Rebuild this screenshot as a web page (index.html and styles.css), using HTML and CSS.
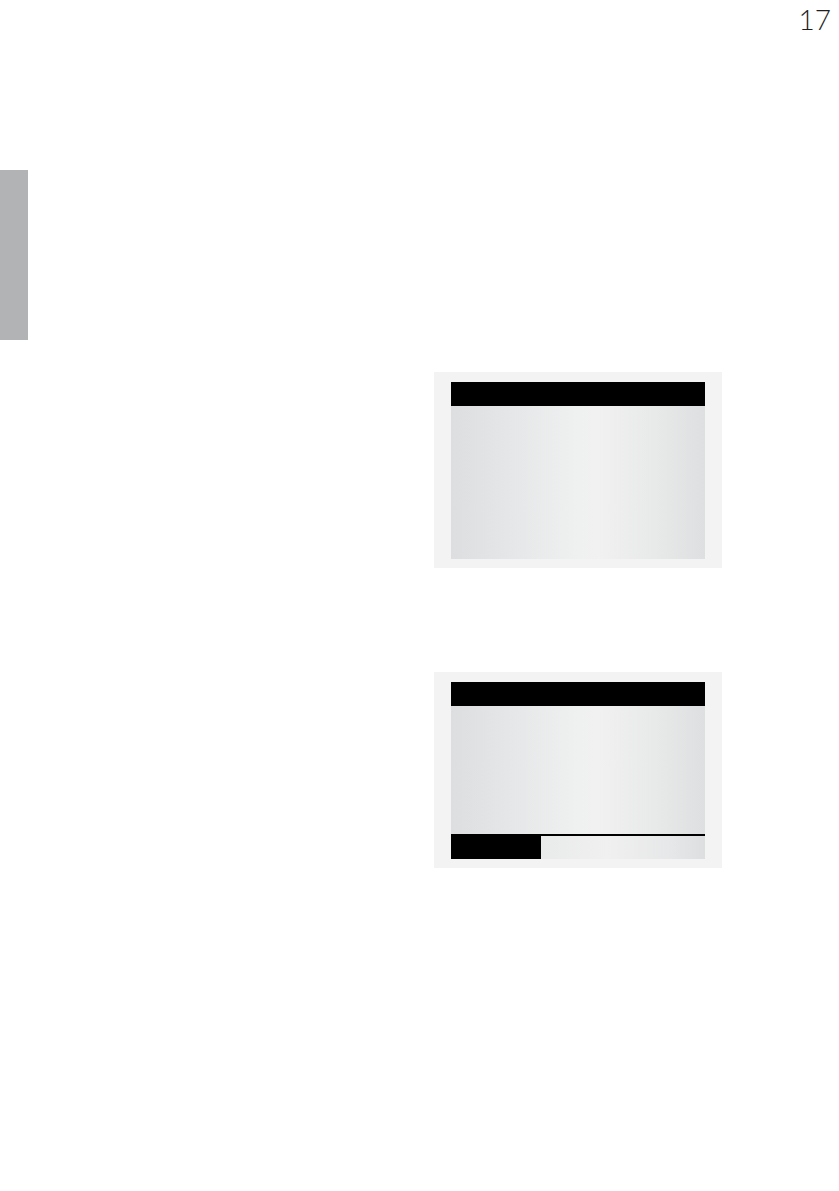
FILE: index.html
```html
<!DOCTYPE html>
<html>
<head>
<meta charset="utf-8">
<link rel="stylesheet" href="styles.css">
</head>
<body>
<div class="page">
  <div class="pagenum">17</div>
  <div class="tab"></div>
  <div class="figure first">
    <div class="screen">
      <div class="screen-head"></div>
      <div class="screen-body tall"></div>
    </div>
  </div>
  <div class="figure second">
    <div class="screen">
      <div class="screen-head"></div>
      <div class="screen-body"></div>
      <div class="screen-foot">
        <div class="foot-key"></div>
        <div class="foot-field"></div>
      </div>
    </div>
  </div>
</div>
</body>
</html>
```

FILE: styles.css
```css
html, body {
  margin: 0;
  padding: 0;
  background: #ffffff;
}
.page {
  width: 839px;
  height: 1191px;
  overflow: hidden;
  font-family: Lato, "Liberation Sans", Arial, sans-serif;
}
.pagenum {
  height: 40px;
  padding-top: 3px;
  box-sizing: border-box;
  text-align: right;
  padding-right: 8px;
  font-size: 28px;
  line-height: 32px;
  color: #1e1e1e;
  font-weight: 300;
}
.tab {
  width: 28px;
  height: 170px;
  margin-top: 130px;
  background: #b1b3b4;
}
.figure {
  width: 288px;
  height: 196px;
  margin-left: 434px;
  padding: 10px 17px 9px 17px;
  box-sizing: border-box;
  background: #f3f3f3;
}
.figure.first { margin-top: 32px; }
.figure.second { margin-top: 104px; }
.screen {
  display: flex;
  flex-direction: column;
  height: 177px;
}
.screen-head {
  height: 24px;
  background: #000;
}
.screen-body {
  flex: 1;
  background: linear-gradient(to right, #dcdedf 0%, #e6e7e8 25%, #eff0f0 50%, #f1f1f1 58%, #e8e9e9 80%, #dedfe0 100%);
}
.screen-foot {
  height: 25px;
  display: flex;
}
.foot-key {
  width: 90px;
  background: #000;
}
.foot-field {
  flex: 1;
  border-top: 2px solid #000;
  background: linear-gradient(to right, #e9eaea 0%, #f0f0f0 40%, #e6e7e8 80%, #dcdedf 100%);
}
```
